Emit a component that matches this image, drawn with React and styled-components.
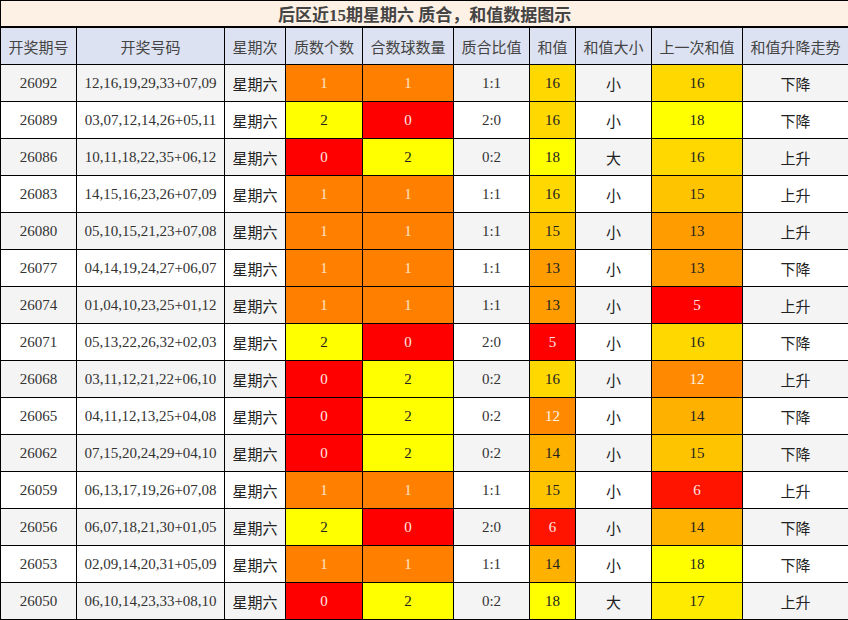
import React from "react";
import styled, { createGlobalStyle } from "styled-components";

const GlobalStyle = createGlobalStyle`
  body {
    margin: 0;
    background: #fff;
    font-family: "Liberation Serif", "Noto Sans CJK SC", serif;
  }
`;

const COLS = [76, 148, 61, 77, 91, 76, 46, 76, 91, 106];
const HEADS = ["开奖期号", "开奖号码", "星期次", "质数个数", "合数球数量", "质合比值", "和值", "和值大小", "上一次和值", "和值升降走势"];

const ROWS = [
  ["26092", "12,16,19,29,33+07,09", 1, 1, "1:1", 16, "小", 16, "下降"],
  ["26089", "03,07,12,14,26+05,11", 2, 0, "2:0", 16, "小", 18, "下降"],
  ["26086", "10,11,18,22,35+06,12", 0, 2, "0:2", 18, "大", 16, "上升"],
  ["26083", "14,15,16,23,26+07,09", 1, 1, "1:1", 16, "小", 15, "上升"],
  ["26080", "05,10,15,21,23+07,08", 1, 1, "1:1", 15, "小", 13, "上升"],
  ["26077", "04,14,19,24,27+06,07", 1, 1, "1:1", 13, "小", 13, "下降"],
  ["26074", "01,04,10,23,25+01,12", 1, 1, "1:1", 13, "小", 5, "上升"],
  ["26071", "05,13,22,26,32+02,03", 2, 0, "2:0", 5, "小", 16, "下降"],
  ["26068", "03,11,12,21,22+06,10", 0, 2, "0:2", 16, "小", 12, "上升"],
  ["26065", "04,11,12,13,25+04,08", 0, 2, "0:2", 12, "小", 14, "下降"],
  ["26062", "07,15,20,24,29+04,10", 0, 2, "0:2", 14, "小", 15, "下降"],
  ["26059", "06,13,17,19,26+07,08", 1, 1, "1:1", 15, "小", 6, "上升"],
  ["26056", "06,07,18,21,30+01,05", 2, 0, "2:0", 6, "小", 14, "下降"],
  ["26053", "02,09,14,20,31+05,09", 1, 1, "1:1", 14, "小", 18, "下降"],
  ["26050", "06,10,14,23,33+08,10", 0, 2, "0:2", 18, "大", 17, "上升"],
];

const COUNT_COLORS = {
  0: { bg: "#ff0000", fg: "#ffe6e6" },
  1: { bg: "#ff8000", fg: "#ffe3c4" },
  2: { bg: "#ffff00", fg: "#222" },
};

// red (5) -> yellow (18), green channel scales with the sum
const sumColor = (v) => {
  const g = Math.round((255 * Math.min(Math.max(v - 5, 0), 13)) / 13);
  return { bg: `rgb(255, ${g}, 0)`, fg: v <= 12 ? (v <= 6 ? "#ffe6e6" : "#fff3e6") : "#222" };
};

const Table = styled.table`
  width: 848px;
  border-collapse: collapse;
  table-layout: fixed;
  color: #333;
`;

const TitleCell = styled.th`
  height: 25px;
  padding: 0;
  background: #fdf0e4;
  border: 1px solid #000;
  border-bottom: 2px solid #000;
  font-family: "Liberation Serif", "Noto Sans CJK SC", serif;
  font-size: 17px;
  font-weight: 700;
  color: #444;
  text-align: center;
  vertical-align: middle;
`;

const HeadCell = styled.th`
  height: 36px;
  padding: 0;
  background: #dce2f1;
  border: 1px solid #000;
  font-family: "Noto Sans CJK SC", sans-serif;
  font-size: 15px;
  font-weight: 400;
  color: #444;
  text-align: center;
`;

const Row = styled.tr`
  height: 37px;
  background: ${({ $odd }) => ($odd ? "#f4f4f4" : "#fff")};
`;

const Cell = styled.td`
  padding: 0;
  border: 1px solid #000;
  text-align: center;
  vertical-align: middle;
  font-family: ${({ $cjk }) => ($cjk ? '"Noto Sans CJK SC", sans-serif' : '"Liberation Serif", "Noto Sans CJK SC", serif')};
  font-size: 15px;
  color: ${({ $fg, $cjk }) => $fg || ($cjk ? "#222" : "#333")};
  background: ${({ $bg }) => $bg || "transparent"};
`;

export default function App() {
  return (
    <>
      <GlobalStyle />
      <Table>
        <colgroup>
          {COLS.map((w, i) => (
            <col key={i} style={{ width: w }} />
          ))}
        </colgroup>
        <thead>
          <tr>
            <TitleCell colSpan={10}>后区近15期星期六 质合，和值数据图示</TitleCell>
          </tr>
          <tr>
            {HEADS.map((h) => (
              <HeadCell key={h}>{h}</HeadCell>
            ))}
          </tr>
        </thead>
        <tbody>
          {ROWS.map((r, i) => {
            const prime = COUNT_COLORS[r[2]];
            const comp = COUNT_COLORS[r[3]];
            const sum = sumColor(r[5]);
            const prev = sumColor(r[7]);
            return (
              <Row key={r[0]} $odd={i % 2 === 0}>
                <Cell>{r[0]}</Cell>
                <Cell>{r[1]}</Cell>
                <Cell $cjk>星期六</Cell>
                <Cell $bg={prime.bg} $fg={prime.fg}>{r[2]}</Cell>
                <Cell $bg={comp.bg} $fg={comp.fg}>{r[3]}</Cell>
                <Cell>{r[4]}</Cell>
                <Cell $bg={sum.bg} $fg={sum.fg}>{r[5]}</Cell>
                <Cell $cjk>{r[6]}</Cell>
                <Cell $bg={prev.bg} $fg={prev.fg}>{r[7]}</Cell>
                <Cell $cjk>{r[8]}</Cell>
              </Row>
            );
          })}
        </tbody>
      </Table>
    </>
  );
}
